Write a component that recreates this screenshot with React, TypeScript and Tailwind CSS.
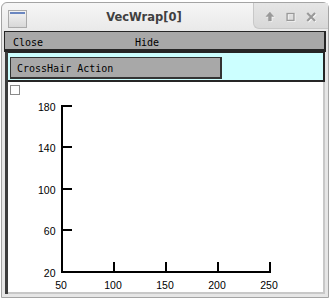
export default function App() {
  const yTicks = [180, 140, 100, 60, 20]
  const xTicks = [50, 100, 150, 200, 250]
  const ty = (v: number) => Math.round(272 - ((v - 20) * 41.6) / 40)
  const tx = (v: number) => Math.round(62 + ((v - 50) * 52) / 50)

  return (
    <div className="w-[330px] h-[300px] bg-white pt-[2px] pl-[1px]">
      <div className="flex h-[296px] w-[328px] flex-col rounded-t-[6px] border border-[#a4a4a4] bg-[#e6e6e6]">
        {/* title bar */}
        <div className="flex h-[28px] items-center rounded-t-[6px] bg-gradient-to-b from-[#f6f6f6] to-[#e9e9e9]">
          <div className="relative ml-[6px] mt-[4px] h-[18px] w-[19px] border border-[#aaaaaa] bg-gradient-to-b from-[#f4f4f4] to-[#d8d8d8]">
            <div className="mx-[1px] mt-[1px] h-[2px] bg-[#6a86c0]" />
          </div>
          <div className="flex-1 pl-[8px] pt-[2px] text-center font-['DejaVu_Sans',sans-serif] text-[11.5px] font-bold text-[#404040]">
            VecWrap[0]
          </div>
          <div className="flex h-[26px] w-[75px] items-center self-start rounded-bl-[6px] border-b border-l border-[#c8c8c8] bg-gradient-to-b from-[#e6e6e6] to-[#d8d8d8] pl-[11px] pr-[8px]">
            <svg width="56" height="12" viewBox="0 0 56 12" className="mt-[3px]">
              <g transform="translate(0.7,0.7)" fill="#ffffff" stroke="#ffffff">
                <path d="M5 1 L9 5.5 H6.5 V10 H3.5 V5.5 H1 Z" strokeWidth="0.5" />
                <rect x="22.5" y="2.5" width="7" height="7" fill="none" strokeWidth="1.4" />
                <path d="M43 2 L51 10 M51 2 L43 10" fill="none" strokeWidth="2.2" />
              </g>
              <g fill="#999999" stroke="#999999">
                <path d="M5 1 L9 5.5 H6.5 V10 H3.5 V5.5 H1 Z" strokeWidth="0.5" />
                <rect x="22.5" y="2.5" width="7" height="7" fill="none" strokeWidth="1.4" />
                <path d="M43 2 L51 10 M51 2 L43 10" fill="none" strokeWidth="2.2" />
              </g>
            </svg>
          </div>
        </div>

        <div className="flex flex-1 flex-col px-[2px] pb-[3px]">
          {/* menu bar */}
          <div className="flex h-[21px] border-t border-l border-r-2 border-b-[3px] border-[#262626] bg-[#a8a8a8] pl-[8px] font-['DejaVu_Sans_Mono',monospace] text-[10px] text-black">
            <div className="flex h-[17px] items-center pt-[3px]">
              <span className="w-[122px]">Close</span>
              <span>Hide</span>
            </div>
          </div>

          {/* panel */}
          <div className="ml-[1px] mr-[1px] flex flex-1 flex-col border-l-[3px] border-[#3c3c3c]">
            <div className="flex h-[30px] items-start border-t border-r-2 border-b-2 border-[#262626] bg-[#ccffff] pl-[2px] pt-[4px]">
              <div className="flex h-[22px] w-[212px] items-center border-t border-l border-r-2 border-b-2 border-[#333333] bg-[#a8a8a8] pl-[6px] pt-[1px] font-['DejaVu_Sans_Mono',monospace] text-[10px] text-black">
                CrossHair Action
              </div>
            </div>

            <div className="flex flex-1 flex-col border-r-2 border-b-2 border-[#c8c8c8] bg-white">
              <div className="ml-[2px] mt-[3px] h-[10px] w-[10px] border border-[#8a8a8a] bg-white" />
              <svg
                width="313"
                height="197"
                viewBox="8 95 313 197"
                className="font-['Liberation_Sans',sans-serif] text-[10.5px]"
                shapeRendering="crispEdges"
              >
                <g stroke="#000" strokeWidth="2">
                  <line x1="62" y1="105" x2="62" y2="273" />
                  <line x1="61" y1="272" x2="271" y2="272" />
                  {yTicks.map((v) => (
                    <line key={v} x1="61" y1={ty(v)} x2="72" y2={ty(v)} />
                  ))}
                  {xTicks.map((v) => (
                    <line key={v} x1={tx(v)} y1="262" x2={tx(v)} y2="273" />
                  ))}
                </g>
                <g fill="#000">
                  {yTicks.map((v) => (
                    <text key={v} x="55.5" y={ty(v) + 5.3} textAnchor="end">
                      {v}
                    </text>
                  ))}
                  {xTicks.map((v) => (
                    <text key={v} x={tx(v) - 1} y="289.3" textAnchor="middle">
                      {v}
                    </text>
                  ))}
                </g>
              </svg>
            </div>
          </div>
        </div>
      </div>
    </div>
  )
}
